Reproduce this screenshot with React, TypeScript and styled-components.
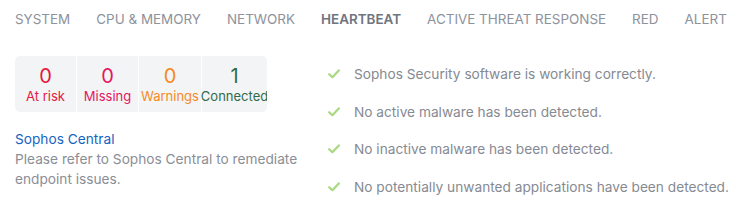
import styled, { createGlobalStyle } from "styled-components";

const GlobalStyle = createGlobalStyle`
  body {
    margin: 0;
    background: #fff;
    font-family: Inter, "Noto Sans", sans-serif;
  }
`;

const Page = styled.div`
  padding: 0 15px;
`;

const Tabs = styled.nav`
  display: flex;
  gap: 26px;
  height: 38px;
  align-items: center;
`;

const Tab = styled.div<{ $active?: boolean }>`
  font-size: 13.45px;
  text-transform: uppercase;
  color: ${({ $active }) => ($active ? "#6f7580" : "#8d929b")};
  font-weight: ${({ $active }) => ($active ? 600 : 400)};
  white-space: nowrap;
`;

const Body = styled.div`
  display: grid;
  grid-template-columns: 313px 1fr;
  padding-top: 18px;
`;

const LeftColumn = styled.div`
  display: flex;
  flex-direction: column;
`;

const Stats = styled.div`
  display: grid;
  grid-template-columns: 61px 61px 62px 65px;
  gap: 1px;
  width: 252px;
  border-radius: 5px;
  overflow: hidden;
`;

const Stat = styled.div<{ $color: string }>`
  background: #f3f4f6;
  height: 56px;
  display: flex;
  flex-direction: column;
  align-items: center;
  justify-content: center;
  color: ${({ $color }) => $color};
`;

const StatValue = styled.div`
  font-size: 20px;
  line-height: 24px;
`;

const StatLabel = styled.div`
  font-size: 13px;
  line-height: 16px;
  white-space: nowrap;
`;

const CentralLink = styled.a`
  margin-top: 17px;
  font-size: 13.7px;
  line-height: 20px;
  color: #1565c0;
  text-decoration: none;
`;

const Note = styled.p`
  margin: 0;
  font-size: 13.7px;
  line-height: 20px;
  color: #8a8e96;
`;

const Checks = styled.ul`
  list-style: none;
  margin: 0;
  padding: 8px 0 0;
  display: flex;
  flex-direction: column;
  gap: 17.5px;
`;

const Check = styled.li`
  display: flex;
  align-items: center;
  gap: 14px;
  font-size: 13.7px;
  line-height: 20px;
  color: #868a92;
  white-space: nowrap;
`;

const CheckIcon = () => (
  <svg width="12" height="10" viewBox="0 0 12 10" aria-hidden>
    <path
      d="M1.2 5.2 L4.4 8.2 L10.8 1.4"
      fill="none"
      stroke="#a8d87f"
      strokeWidth="2.2"
      strokeLinecap="round"
      strokeLinejoin="round"
    />
  </svg>
);

const tabs = [
  "System",
  "CPU & Memory",
  "Network",
  "Heartbeat",
  "Active Threat Response",
  "RED",
  "Alert",
];

const stats = [
  { value: 0, label: "At risk", color: "#e5173f" },
  { value: 0, label: "Missing", color: "#e5175f" },
  { value: 0, label: "Warnings", color: "#f5891f" },
  { value: 1, label: "Connected", color: "#2f6b4a" },
];

const checks = [
  "Sophos Security software is working correctly.",
  "No active malware has been detected.",
  "No inactive malware has been detected.",
  "No potentially unwanted applications have been detected.",
];

export default function App() {
  return (
    <Page>
      <GlobalStyle />
      <Tabs>
        {tabs.map((t) => (
          <Tab key={t} $active={t === "Heartbeat"}>
            {t}
          </Tab>
        ))}
      </Tabs>
      <Body>
        <LeftColumn>
          <Stats>
            {stats.map((s) => (
              <Stat key={s.label} $color={s.color}>
                <StatValue>{s.value}</StatValue>
                <StatLabel>{s.label}</StatLabel>
              </Stat>
            ))}
          </Stats>
          <CentralLink href="#">Sophos Central</CentralLink>
          <Note>
            Please refer to Sophos Central to remediate
            <br />
            endpoint issues.
          </Note>
        </LeftColumn>
        <Checks>
          {checks.map((c) => (
            <Check key={c}>
              <CheckIcon />
              {c}
            </Check>
          ))}
        </Checks>
      </Body>
    </Page>
  );
}
